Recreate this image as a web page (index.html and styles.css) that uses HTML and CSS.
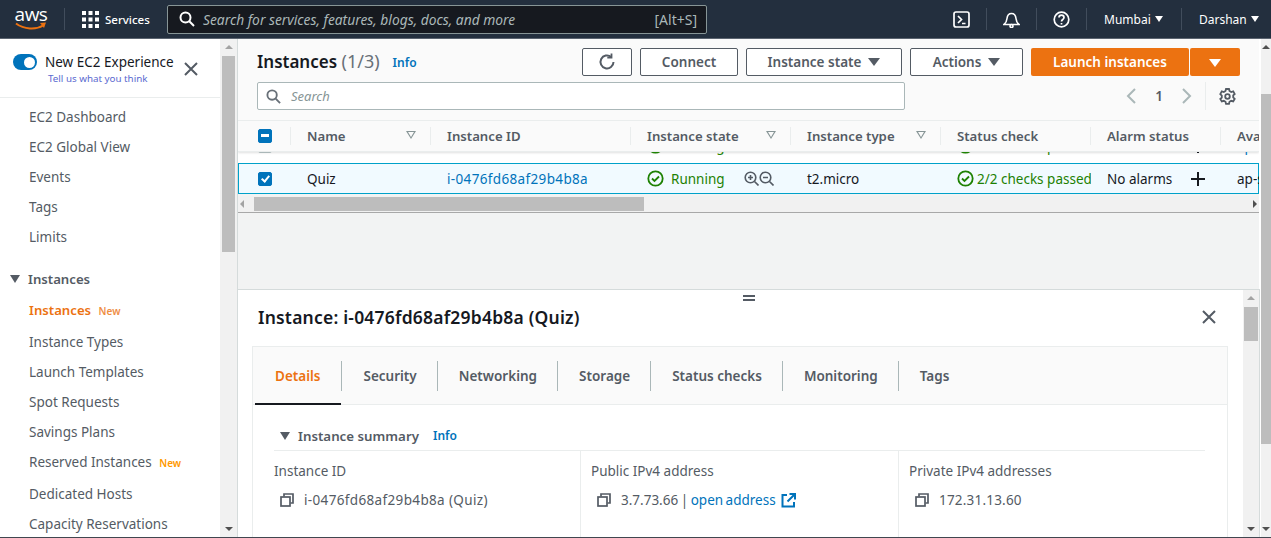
FILE: index.html
```html
<!DOCTYPE html>
<html lang="en">
  <head>
    <meta charset="UTF-8">
    <meta name="viewport" content="width=device-width, initial-scale=1.0">
    <title>Instances | EC2 Management Console</title>
    <link rel="stylesheet" href="styles.css">
  </head>
  <body>
    <header class="topbar">
      <a class="topbar__logo" href="#">
        <span class="topbar__logo-text">aws</span>
        <svg class="topbar__smile" width="32" height="9" viewBox="0 0 32 9"><path d="M1 1.500c8 6 20 6.500 27 2" fill="none" stroke="#ec7211" stroke-width="2"/><path d="M25 1l6-.5-2 5.500z" fill="#ec7211"/></svg>
      </a>
      <span class="topbar__rule topbar__rule--logo"></span>
      <svg class="topbar__grid" width="17" height="17" viewBox="0 0 17 17" fill="#fff"><path d="M0 0h4v4H0zM6.500 0h4v4h-4zM13 0h4v4h-4zM0 6.500h4v4H0zM6.500 6.500h4v4h-4zM13 6.500h4v4h-4zM0 13h4v4H0zM6.500 13h4v4h-4zM13 13h4v4h-4z"/></svg>
      <span class="topbar__services">Services</span>
      <div class="topbar__search">
        <svg width="16" height="16" viewBox="0 0 16 16" fill="none" stroke="#fff" stroke-width="2"><circle cx="6.500" cy="6.500" r="5"/><path d="M10.300 10.300L15 15"/></svg>
        <span class="topbar__search-text">Search for services, features, blogs, docs, and more</span>
        <span class="topbar__search-key">[Alt+S]</span>
      </div>
      <div class="topbar__right">
        <span class="topbar__cell topbar__cell--icon">
          <svg width="17" height="17" viewBox="0 0 17 17" fill="none" stroke="#fff" stroke-width="1.700"><rect x="1" y="1" width="15" height="15" rx="2"/><path d="M5 5l3.500 3.500L5 12M9 12.500h3.500"/></svg>
        </span>
        <span class="topbar__cell topbar__cell--icon">
          <svg width="17" height="17" viewBox="0 0 17 17" fill="none" stroke="#fff" stroke-width="1.600"><path d="M1 13.500c2-1.500 2.700-3 3-6 .3-3 2-5 4.500-5s4.200 2 4.500 5c.3 3 1 4.500 3 6z"/><circle cx="8.500" cy="15" r="1.500"/></svg>
        </span>
        <span class="topbar__cell topbar__cell--icon">
          <svg width="17" height="17" viewBox="0 0 17 17" fill="none" stroke="#fff" stroke-width="1.700"><circle cx="8.500" cy="8.500" r="7.300"/><path d="M6 6.500c0-3.300 5-3.300 5 0 0 2-2.500 2-2.500 4"/><path d="M8.500 12v1.500"/></svg>
        </span>
        <span class="topbar__cell topbar__cell--menu topbar__cell--mumbai">Mumbai <i class="caret caret--white"></i></span>
        <span class="topbar__cell topbar__cell--menu topbar__cell--user">Darshan <i class="caret caret--white"></i></span>
      </div>
    </header>

    <div class="layout">
      <aside class="sidebar">
        <div class="sidebar__scroll">
          <div class="sidebar__new">
            <span class="toggle"></span>
            <div class="sidebar__new-text">
              <span class="sidebar__new-title">New EC2 Experience</span>
              <a class="sidebar__new-link" href="#">Tell us what you think</a>
            </div>
            <svg class="sidebar__close" width="14" height="14" viewBox="0 0 14 14" stroke="#545b64" stroke-width="2"><path d="M1 1l12 12M13 1L1 13"/></svg>
          </div>
          <ul class="nav nav--top">
            <li class="nav__item">EC2 Dashboard</li>
            <li class="nav__item">EC2 Global View</li>
            <li class="nav__item">Events</li>
            <li class="nav__item">Tags</li>
            <li class="nav__item">Limits</li>
          </ul>
          <h3 class="nav__group"><i class="caret caret--grey"></i>Instances</h3>
          <ul class="nav nav--group">
            <li class="nav__item nav__item--active">Instances <span class="nav__badge nav__badge--first">New</span></li>
            <li class="nav__item nav__item--gap">Instance Types</li>
            <li class="nav__item">Launch Templates</li>
            <li class="nav__item">Spot Requests</li>
            <li class="nav__item">Savings Plans</li>
            <li class="nav__item">Reserved Instances <span class="nav__badge">New</span></li>
            <li class="nav__item nav__item--gap">Dedicated Hosts</li>
            <li class="nav__item">Capacity Reservations</li>
          </ul>
        </div>
        <div class="scrollbar scrollbar--nav">
          <i class="scrollbar__up"></i>
          <span class="scrollbar__thumb scrollbar__thumb--nav"></span>
          <i class="scrollbar__down"></i>
        </div>
      </aside>

      <main class="main">
        <div class="content">
          <section class="instances">
            <div class="instances__head">
              <div class="instances__title-row">
                <h1 class="instances__title">Instances <span class="instances__count">(1/3)</span></h1>
                <a class="info" href="#">Info</a>
                <div class="actions">
                  <button class="btn btn--icon">
                    <svg width="18" height="18" viewBox="0 0 18 18" fill="none" stroke="#545b64" stroke-width="2"><path d="M15.500 9a6.500 6.500 0 1 1-2.300-5"/><path d="M13.500 0.500v4.200H9.300" stroke-width="1.800"/></svg>
                  </button>
                  <button class="btn btn--connect">Connect</button>
                  <button class="btn btn--state">Instance state <i class="caret caret--btn"></i></button>
                  <button class="btn btn--actions">Actions <i class="caret caret--btn"></i></button>
                  <div class="launch">
                    <button class="launch__main">Launch instances</button>
                    <button class="launch__more"><i class="caret caret--btn-white"></i></button>
                  </div>
                </div>
              </div>
              <div class="instances__search-row">
                <div class="search">
                  <svg width="15" height="15" viewBox="0 0 16 16" fill="none" stroke="#687078" stroke-width="2"><circle cx="6.500" cy="6.500" r="5"/><path d="M10.300 10.300L15 15"/></svg>
                  <span class="search__text">Search</span>
                </div>
                <div class="pager">
                  <svg width="12" height="18" viewBox="0 0 12 18" fill="none" stroke="#aab7b8" stroke-width="2"><path d="M10 2L3 9l7 7"/></svg>
                  <span class="pager__num">1</span>
                  <svg width="12" height="18" viewBox="0 0 12 18" fill="none" stroke="#aab7b8" stroke-width="2"><path d="M2 2l7 7-7 7"/></svg>
                  <span class="pager__rule"></span>
                  <svg width="17" height="17" viewBox="0 0 17 17" fill="none" stroke="#545b64" stroke-width="1.800"><path d="M7 1h3l.5 2 1.700 1 2-.6 1.500 2.600-1.500 1.400v2l1.500 1.400-1.500 2.600-2-.6-1.700 1-.5 2H7l-.5-2-1.700-1-2 .6L1.300 11l1.500-1.400v-2L1.300 6l1.500-2.600 2 .6 1.700-1z"/><circle cx="8.500" cy="8.500" r="2.300"/></svg>
                </div>
              </div>
            </div>

            <div class="table">
              <div class="table__row table__row--head">
                <div class="table__cell table__cell--check"><span class="check check--mixed"></span></div>
                <div class="table__cell">Name<i class="sort"></i></div>
                <div class="table__cell">Instance ID</div>
                <div class="table__cell">Instance state<i class="sort"></i></div>
                <div class="table__cell">Instance type<i class="sort"></i></div>
                <div class="table__cell">Status check</div>
                <div class="table__cell">Alarm status</div>
                <div class="table__cell table__cell--last">Availability Zone</div>
              </div>
              <div class="table__body">
                <div class="table__row table__row--plain">
                  <div class="table__cell table__cell--check"><span class="check"></span></div>
                  <div class="table__cell"></div>
                  <div class="table__cell"></div>
                  <div class="table__cell table__cell--state">
                    <svg class="ok" width="17" height="17" viewBox="0 0 17 17" fill="none" stroke="#1d8102" stroke-width="1.800"><circle cx="8.500" cy="8.500" r="7.200"/><path d="M5 8.500l2.500 2.500L12 6.500"/></svg>
                    <span class="status-text">Running</span>
                  </div>
                  <div class="table__cell"></div>
                  <div class="table__cell table__cell--status">
                    <svg class="ok" width="17" height="17" viewBox="0 0 17 17" fill="none" stroke="#1d8102" stroke-width="1.800"><circle cx="8.500" cy="8.500" r="7.200"/><path d="M5 8.500l2.500 2.500L12 6.500"/></svg>
                    <span class="status-text">2/2 checks passed</span>
                  </div>
                  <div class="table__cell table__cell--alarm">No alarms<span class="plus"></span></div>
                  <div class="table__cell table__cell--last"><span class="link">ap-south-1a</span></div>
                </div>
                <div class="table__row table__row--selected">
                  <div class="table__cell table__cell--check"><span class="check check--on"></span></div>
                  <div class="table__cell table__cell--dark">Quiz</div>
                  <div class="table__cell"><a class="link id" href="#">i-0476fd68af29b4b8a</a></div>
                  <div class="table__cell table__cell--state">
                    <svg class="ok" width="17" height="17" viewBox="0 0 17 17" fill="none" stroke="#1d8102" stroke-width="1.800"><circle cx="8.500" cy="8.500" r="7.200"/><path d="M5 8.500l2.500 2.500L12 6.500"/></svg>
                    <span class="status-text">Running</span>
                    <span class="zoom">
                      <svg width="15" height="15" viewBox="0 0 15 15" fill="none" stroke="#545b64" stroke-width="1.600"><circle cx="6.500" cy="6.500" r="5.300"/><path d="M10.500 10.500L14.500 14.500M4 6.500h5M6.500 4v5"/></svg>
                      <svg width="15" height="15" viewBox="0 0 15 15" fill="none" stroke="#545b64" stroke-width="1.600"><circle cx="6.500" cy="6.500" r="5.300"/><path d="M10.500 10.500L14.500 14.500M4 6.500h5"/></svg>
                    </span>
                  </div>
                  <div class="table__cell table__cell--dark">t2.micro</div>
                  <div class="table__cell table__cell--status">
                    <svg class="ok" width="17" height="17" viewBox="0 0 17 17" fill="none" stroke="#1d8102" stroke-width="1.800"><circle cx="8.500" cy="8.500" r="7.200"/><path d="M5 8.500l2.500 2.500L12 6.500"/></svg>
                    <span class="status-text">2/2 checks passed</span>
                  </div>
                  <div class="table__cell table__cell--alarm table__cell--dark">No alarms<span class="plus"></span></div>
                  <div class="table__cell table__cell--last table__cell--dark">ap-south-1a</div>
                </div>
              </div>
              <div class="hscroll">
                <i class="hscroll__left"></i>
                <span class="hscroll__thumb"></span>
                <i class="hscroll__right"></i>
              </div>
            </div>
          </section>

          <section class="details">
            <span class="details__handle"></span>
            <div class="details__scroll">
              <div class="details__head">
                <h2 class="details__title">Instance: i-0476fd68af29b4b8a (Quiz)</h2>
                <svg width="14" height="14" viewBox="0 0 14 14" stroke="#545b64" stroke-width="2"><path d="M1 1l12 12M13 1L1 13"/></svg>
              </div>
              <div class="tabs">
                <ul class="tabs__list">
                  <li class="tabs__tab tabs__tab--active">Details</li>
                  <li class="tabs__tab">Security</li>
                  <li class="tabs__tab">Networking</li>
                  <li class="tabs__tab">Storage</li>
                  <li class="tabs__tab">Status checks</li>
                  <li class="tabs__tab">Monitoring</li>
                  <li class="tabs__tab tabs__tab--last">Tags</li>
                </ul>
                <div class="summary">
                  <h3 class="summary__head"><i class="caret caret--grey"></i>Instance summary <a class="info" href="#">Info</a></h3>
                  <div class="summary__grid">
                    <div class="summary__col">
                      <div class="summary__label">Instance ID</div>
                      <div class="summary__value">
                        <svg width="14" height="14" viewBox="0 0 14 14" fill="none" stroke="#545b64" stroke-width="1.700"><rect x="1" y="4" width="9" height="9"/><path d="M4 3.500V1h9v9h-2.500"/></svg>
                        <span class="id">i-0476fd68af29b4b8a (Quiz)</span>
                      </div>
                    </div>
                    <div class="summary__col">
                      <div class="summary__label">Public IPv4 address</div>
                      <div class="summary__value">
                        <svg width="14" height="14" viewBox="0 0 14 14" fill="none" stroke="#545b64" stroke-width="1.700"><rect x="1" y="4" width="9" height="9"/><path d="M4 3.500V1h9v9h-2.500"/></svg>
                        <span class="summary__ip">3.7.73.66 | <a class="link" href="#">open address</a></span>
                        <svg class="summary__ext" width="15" height="15" viewBox="0 0 15 15" fill="none" stroke="#0073bb" stroke-width="2"><path d="M6 2H1.500v11.500H13V9"/><path d="M8.500 1H14v5.500M14 1L6.500 8.500"/></svg>
                      </div>
                    </div>
                    <div class="summary__col">
                      <div class="summary__label">Private IPv4 addresses</div>
                      <div class="summary__value">
                        <svg width="14" height="14" viewBox="0 0 14 14" fill="none" stroke="#545b64" stroke-width="1.700"><rect x="1" y="4" width="9" height="9"/><path d="M4 3.500V1h9v9h-2.500"/></svg>
                        <span class="summary__num">172.31.13.60</span>
                      </div>
                    </div>
                  </div>
                </div>
              </div>
            </div>
            <div class="scrollbar scrollbar--details">
              <i class="scrollbar__up scrollbar__up--pale"></i>
              <span class="scrollbar__thumb scrollbar__thumb--details"></span>
              <i class="scrollbar__down"></i>
            </div>
          </section>
        </div>
        <div class="scrollbar scrollbar--main">
          <i class="scrollbar__up"></i>
          <span class="scrollbar__thumb scrollbar__thumb--main"></span>
          <i class="scrollbar__down"></i>
        </div>
      </main>
    </div>
  </body>
</html>
```

FILE: styles.css
```css
:root {
  --navy: #232f3e;
  --grey-text: #545b64;
  --dark-text: #16191f;
  --line: #eaeded;
  --blue: #0073bb;
  --orange: #ec7211;
  --green: #1d8102;
  --thumb: #bdbdbd;
  --font: "Noto Sans", "Open Sans", Arial, sans-serif;
}

*, *::before, *::after {
  box-sizing: border-box;
}

html, body {
  height: 100%;
  margin: 0;
  overflow: hidden;
}

body {
  display: flex;
  flex-direction: column;
  font-family: var(--font);
  font-size: 13.500px;
  color: var(--grey-text);
  background-color: #fff;
  border-bottom: 1px solid #414750;
}

h1, h2, h3, ul {
  margin: 0;
  padding: 0;
  list-style: none;
}

a {
  text-decoration: none;
}

i {
  display: inline-block;
}

button {
  font-family: var(--font);
}

/* carets */
.caret {
  width: 0;
  height: 0;
  border-style: solid;
  border-color: currentColor transparent transparent;
}
.caret--white {
  border-width: 6px 4.500px 0;
  color: #fff;
}
.caret--grey {
  border-width: 8px 5.500px 0;
  color: var(--grey-text);
}
.caret--btn {
  margin-left: 7px;
  border-width: 8px 6px 0;
  color: var(--grey-text);
}
.caret--btn-white {
  border-width: 8px 6px 0;
  color: #fff;
}

/* top navigation */
.topbar {
  display: flex;
  flex: none;
  align-items: center;
  height: 39px;
  padding-left: 15px;
  background-color: var(--navy);
  border-bottom: 1px solid #5b6470;
  color: #fff;
}

.topbar__logo {
  display: flex;
  flex-direction: column;
  width: 32px;
  height: 30px;
  align-items: center;
  color: #fff;
}

.topbar__logo-text {
  margin-top: 1px;
  font-family: "Open Sans", sans-serif;
  font-size: 19px;
  line-height: 18px;
  letter-spacing: -0.5px;
}

.topbar__smile {
  margin-top: -1px;
}

.topbar__rule {
  width: 1px;
  height: 22px;
  background-color: #414d5c;
}
.topbar__rule--logo {
  margin: 0 17px;
}

.topbar__grid {
  flex: none;
}

.topbar__services {
  width: 45px;
  margin-left: 6px;
  font-size: 11.500px;
  font-weight: 500;
  white-space: nowrap;
}

.topbar__search {
  display: flex;
  align-items: center;
  gap: 8px;
  width: 540px;
  height: 29px;
  margin-left: 17px;
  padding: 0 9px 0 11px;
  background-color: #16191f;
  border: 1px solid #879596;
  border-radius: 2px;
}

.topbar__search-text {
  flex: 1;
  font-size: 13.800px;
  font-style: italic;
  color: #aab7b8;
}

.topbar__search-key {
  font-size: 14px;
  color: #aab7b8;
}

.topbar__right {
  display: flex;
  align-items: center;
  height: 22px;
  margin-left: auto;
}

.topbar__cell {
  display: flex;
  align-items: center;
  justify-content: center;
  height: 22px;
  font-size: 12px;
  border-left: 1px solid #414d5c;
}
.topbar__cell:first-child {
  border-left: 0;
}
.topbar__cell--icon {
  width: 50px;
}
.topbar__cell--menu {
  justify-content: flex-start;
  gap: 4px;
  padding-left: 17px;
}
.topbar__cell--mumbai {
  width: 95px;
}
.topbar__cell--user {
  width: 90px;
}

/* page columns */
.layout {
  display: flex;
  flex: 1;
  min-height: 0;
}

.sidebar {
  display: flex;
  flex: none;
  width: 238px;
  border-right: 1px solid #d5dbdb;
  overflow: hidden;
}

.sidebar__scroll {
  flex: none;
  width: 220px;
  overflow: hidden;
}

.sidebar__new {
  display: flex;
  align-items: flex-start;
  height: 59px;
  padding: 14px 0 0 13px;
  border-bottom: 1px solid var(--line);
}

.toggle {
  position: relative;
  flex: none;
  width: 24px;
  height: 16px;
  margin-top: 1px;
  background-color: var(--blue);
  border-radius: 8px;
}
.toggle::after {
  content: "";
  position: absolute;
  top: 2.500px;
  right: 2.500px;
  width: 11px;
  height: 11px;
  background-color: #fff;
  border-radius: 50%;
}

.sidebar__new-text {
  display: flex;
  flex-direction: column;
  width: 128px;
  margin-left: 8px;
}

.sidebar__new-title {
  font-size: 13.500px;
  line-height: 18px;
  color: var(--dark-text);
  white-space: nowrap;
}

.sidebar__new-link {
  margin: 1px 0 0 3px;
  font-size: 9.800px;
  line-height: 14px;
  color: #5a6ad0;
  white-space: nowrap;
}

.sidebar__close {
  flex: none;
  margin: 9px 0 0 11px;
}

.nav--top {
  margin-top: 4px;
}
.nav--group {
  margin-top: 1px;
}

.nav__item {
  height: 30px;
  padding-left: 29px;
  font-size: 13.500px;
  line-height: 30px;
  white-space: nowrap;
}
.nav__item--active {
  font-size: 13.200px;
  font-weight: 600;
  color: var(--orange);
}
.nav__item--gap {
  margin-top: 2px;
}

.nav__badge {
  margin-left: 4px;
  font-size: 10px;
  font-weight: 600;
  color: #ff9900;
}
.nav__badge--first {
  color: var(--orange);
  opacity: .8;
}

.nav__group {
  display: flex;
  align-items: center;
  gap: 8px;
  height: 30px;
  margin-top: 12px;
  padding-left: 10px;
  font-size: 13.200px;
  font-weight: 600;
}

/* fake scrollbars */
.scrollbar {
  position: relative;
  flex: none;
  background-color: #f1f1f1;
}
.scrollbar--nav {
  width: 17px;
}
.scrollbar--main {
  width: 10px;
  margin-left: 2px;
}
.scrollbar--details {
  width: 16px;
  height: 100%;
}

.scrollbar__up, .scrollbar__down {
  position: absolute;
  left: 50%;
  width: 0;
  height: 0;
  margin-left: -4px;
  border-style: solid;
  border-color: transparent;
}
.scrollbar__up {
  top: 6px;
  border-width: 0 4px 4px;
  border-bottom-color: #505050;
}
.scrollbar__up--pale {
  border-bottom-color: #a3a3a3;
}
.scrollbar--nav .scrollbar__up {
  border-bottom-color: #a3a3a3;
}
.scrollbar__down {
  bottom: 6px;
  border-width: 4px 4px 0;
  border-top-color: #505050;
}

.scrollbar__thumb {
  position: absolute;
  left: 1px;
  right: 1px;
  background-color: var(--thumb);
}
.scrollbar__thumb--nav {
  top: 17px;
  height: 196px;
  left: 2px;
  right: 2px;
}
.scrollbar__thumb--main {
  top: 55px;
  height: 350px;
  left: 0;
  right: 0;
}
.scrollbar__thumb--details {
  top: 17px;
  height: 34px;
}

/* instances pane */
.main {
  display: flex;
  flex: 1;
  min-width: 0;
}

.content {
  display: flex;
  flex: 1;
  flex-direction: column;
  min-width: 0;
}

.instances {
  flex: none;
  height: 250px;
  background-color: #f2f3f3;
}

.instances__head {
  height: 81px;
  padding: 9px 19px 0;
  background-color: #fafafa;
}

.instances__title-row {
  display: flex;
  align-items: center;
  height: 28px;
}

.instances__title {
  margin-top: -2px;
  font-size: 17px;
  font-weight: 600;
  color: var(--dark-text);
}

.instances__count {
  font-size: 18px;
  font-weight: 400;
  color: #687078;
}

.info {
  margin-left: 13px;
  font-size: 12px;
  font-weight: 600;
  color: var(--blue);
}

.actions {
  display: flex;
  gap: 8px;
  margin-left: auto;
}

.btn {
  display: flex;
  align-items: center;
  justify-content: center;
  height: 28px;
  padding: 0;
  background-color: #fff;
  border: 1px solid var(--grey-text);
  border-radius: 2px;
  font-size: 13.500px;
  font-weight: 600;
  color: var(--grey-text);
}
.btn--icon {
  width: 50px;
}
.btn--connect {
  width: 98px;
}
.btn--state {
  width: 156px;
}
.btn--actions {
  width: 113px;
}

.launch {
  display: flex;
  gap: 1px;
  width: 209px;
}

.launch__main, .launch__more {
  height: 28px;
  padding: 0;
  background-color: var(--orange);
  border: 0;
  border-radius: 2px;
  font-size: 13.500px;
  font-weight: 600;
  color: #fff;
}
.launch__main {
  width: 158px;
}
.launch__more {
  flex: 1;
}

.instances__search-row {
  display: flex;
  align-items: center;
  margin-top: 6px;
}

.search {
  display: flex;
  align-items: center;
  gap: 10px;
  width: 648px;
  height: 28px;
  padding-left: 8px;
  background-color: #fff;
  border: 1px solid #aab7b8;
  border-radius: 2px;
}

.search__text {
  font-size: 13px;
  font-style: italic;
  color: #879596;
}

.pager {
  display: flex;
  align-items: center;
  height: 28px;
  margin-left: auto;
  padding-right: 4px;
}
.pager__num {
  width: 44px;
  font-size: 13.500px;
  font-weight: 600;
  text-align: center;
}
.pager__rule {
  width: 1px;
  height: 28px;
  margin: 0 13px 0 12px;
  background-color: var(--line);
}

/* table */
.table {
  overflow: hidden;
  border-top: 1px solid var(--line);
}

.table__row {
  display: grid;
  grid-template-columns: 53px 140px 200px 160px 150px 150px 130px 200px;
  white-space: nowrap;
  overflow: hidden;
}

.table__row--head {
  position: relative;
  height: 31px;
  padding-bottom: 1px;
  background-color: #fafafa;
  border-bottom: 1px solid var(--line);
  box-shadow: 0 1px 2px rgba(0, 0, 0, .12);
  font-weight: 600;
}

.table__cell {
  position: relative;
  display: flex;
  align-items: center;
  min-width: 0;
  padding-left: 16px;
  overflow: hidden;
  font-size: 13.500px;
}
.table__row--head .table__cell {
  font-size: 13.200px;
}
.table__row--head .table__cell::after {
  content: "";
  position: absolute;
  top: 6px;
  right: 0;
  width: 1px;
  height: 18px;
  background-color: var(--line);
}
.table__cell--check {
  padding-left: 20px;
}
.table__cell--dark {
  color: var(--dark-text);
}
.table__cell--state {
  gap: 7px;
  overflow: visible;
}
.table__cell--status {
  gap: 3px;
}
.table__cell--alarm {
  gap: 19px;
}

.sort {
  position: absolute;
  top: 10px;
  right: 15px;
  width: 0;
  height: 0;
  border-style: solid;
  border-width: 8px 5.500px 0;
  border-color: #879596 transparent transparent;
}
.sort::after {
  content: "";
  position: absolute;
  top: -7px;
  left: -3.500px;
  border-style: solid;
  border-width: 5.500px 3.500px 0;
  border-color: #fafafa transparent transparent;
}

.table__body {
  display: flex;
  flex-direction: column;
  justify-content: flex-end;
  height: 42px;
  overflow: hidden;
  background-color: #fff;
}

.table__row--plain, .table__row--selected {
  flex: none;
  height: 31px;
}
.table__row--plain {
  margin-bottom: 2px;
}

.table__row--selected {
  background-color: #f1faff;
  box-shadow: inset 0 0 0 1px #00a1c9;
}

.check {
  width: 14px;
  height: 14px;
  background-color: #fff;
  border: 1px solid #aab7b8;
  border-radius: 2px;
}
.check--mixed {
  position: relative;
  background-color: var(--blue);
  border-color: var(--blue);
}
.check--mixed::after {
  content: "";
  position: absolute;
  top: 4.500px;
  left: 2px;
  width: 8px;
  height: 2.500px;
  background-color: #fff;
}
.check--on {
  position: relative;
  background-color: var(--blue);
  border-color: var(--blue);
}
.check--on::after {
  content: "";
  position: absolute;
  top: 1px;
  left: 3.500px;
  width: 5px;
  height: 8px;
  border: solid #fff;
  border-width: 0 2.500px 2.500px 0;
  transform: rotate(40deg);
}

.ok {
  flex: none;
}

.status-text {
  color: var(--green);
}

.zoom {
  display: flex;
  gap: 0;
  margin-left: 12px;
}

.plus {
  position: relative;
  width: 14px;
  height: 14px;
  flex: none;
  background: linear-gradient(var(--dark-text), var(--dark-text)) center / 14px 2px no-repeat,
    linear-gradient(var(--dark-text), var(--dark-text)) center / 2px 14px no-repeat;
}

.link {
  color: var(--blue);
}

.id {
  letter-spacing: .35px;
}

.hscroll {
  position: relative;
  height: 17px;
  margin-top: 2px;
  background-color: #f1f1f1;
  border-bottom: 1px solid #a8a8a8;
}
.hscroll__left, .hscroll__right {
  position: absolute;
  top: 4px;
  width: 0;
  height: 0;
  border-style: solid;
  border-color: transparent;
  border-width: 4px;
}
.hscroll__left {
  left: 2px;
  border-left: 0;
  border-right-color: #a3a3a3;
}
.hscroll__right {
  right: 2px;
  border-right: 0;
  border-left-color: #505050;
}
.hscroll__thumb {
  position: absolute;
  top: 1px;
  left: 16px;
  width: 390px;
  height: 14px;
  background-color: var(--thumb);
}

/* details pane */
.details {
  position: relative;
  display: flex;
  flex: 1;
  min-height: 0;
  margin-right: -1px;
  background-color: #fff;
  border-top: 1px solid #d5dbdb;
  border-right: 1px solid #d5dbdb;
  overflow: hidden;
}

.details__handle {
  position: absolute;
  top: 5px;
  left: 505px;
  width: 12px;
  height: 6px;
  border-top: 2px solid var(--grey-text);
  border-bottom: 2px solid var(--grey-text);
}

.details__scroll {
  flex: 1;
  min-width: 0;
  padding-left: 14px;
}

.details__head {
  display: flex;
  align-items: center;
  justify-content: space-between;
  height: 56px;
  padding: 0 27px 3px 6px;
}

.details__title {
  font-size: 17.500px;
  font-weight: 600;
  letter-spacing: .2px;
  color: var(--dark-text);
}

.tabs {
  width: 976px;
  height: 300px;
  background-color: #fff;
  border: 1px solid var(--line);
}

.tabs__list {
  display: flex;
  align-items: center;
  height: 58px;
  padding-left: 2px;
  background-color: #fafafa;
  border-bottom: 1px solid var(--line);
}

.tabs__tab {
  position: relative;
  height: 30px;
  padding: 0 20px 0 21px;
  border-right: 1px solid #aab7b8;
  font-size: 13.500px;
  font-weight: 600;
  line-height: 30px;
  white-space: nowrap;
}
.tabs__tab--active {
  padding-left: 20px;
  padding-right: 21px;
  color: var(--orange);
}
.tabs__tab--active::after {
  content: "";
  position: absolute;
  left: 0;
  right: 0;
  bottom: -14px;
  height: 2px;
  background-color: var(--dark-text);
}
.tabs__tab--last {
  border-right: 0;
}

.summary {
  padding: 21px 22px 0 21px;
}

.summary__head {
  display: flex;
  align-items: center;
  gap: 8px;
  height: 25px;
  padding-bottom: 5px;
  padding-left: 6px;
  border-bottom: 1px solid var(--line);
  font-size: 13.300px;
  font-weight: 600;
}
.summary__head .info {
  margin-left: 6px;
}

.summary__grid {
  display: grid;
  grid-template-columns: 306px 318px 1fr;
}

.summary__col {
  height: 100px;
  padding: 10px 0 0 10px;
  border-left: 1px solid var(--line);
}
.summary__col:first-child {
  padding-left: 0;
  border-left: 0;
}

.summary__label {
  height: 20px;
  font-size: 13.500px;
  line-height: 20px;
}

.summary__value {
  display: flex;
  align-items: center;
  gap: 10px;
  height: 20px;
  margin-top: 9px;
  padding-left: 6px;
  font-size: 13.500px;
  white-space: nowrap;
}

.summary__ip {
  word-spacing: -1px;
}

.summary__num {
  letter-spacing: .2px;
}

.summary__ext {
  margin-left: -5px;
}
```
